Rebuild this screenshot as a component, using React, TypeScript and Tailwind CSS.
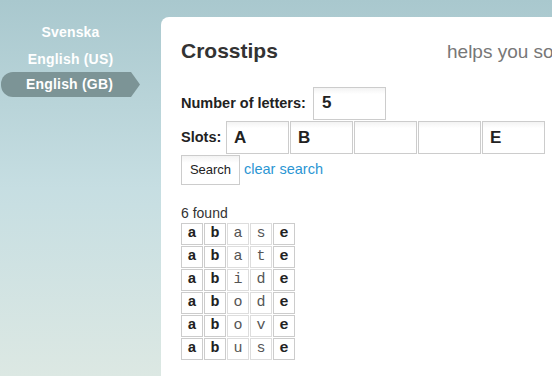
import React from "react";

const words = ["abase", "abate", "abide", "abode", "above", "abuse"];
const known = [true, true, false, false, true];
const slots = ["A", "B", "", "", "E"];

const App: React.FC = () => {
  return (
    <div className="w-[552px] h-[376px] overflow-hidden flex bg-gradient-to-b from-[#a9c8ce] via-[#c6dee2] to-[#dce8e3] font-['Liberation_Sans',Arial,sans-serif]">
      {/* Language menu */}
      <div className="w-[161px] shrink-0 pt-[22px] flex flex-col items-start text-white font-bold text-[14px] tracking-[0.2px]">
        <div className="w-[141px] h-[20px] leading-[20px] text-center">Svenska</div>
        <div className="w-[141px] h-[26px] leading-[26px] mt-[4px] text-center">English (US)</div>
        <div className="ml-px w-[139px] h-[25px] leading-[25px] rounded-l-[12px] bg-[#7c9496] text-center pr-[2px] [clip-path:polygon(0_0,calc(100%_-_9px)_0,100%_50%,calc(100%_-_9px)_100%,0_100%)]">
          English (GB)
        </div>
      </div>

      {/* Main panel */}
      <div className="flex-1 mt-[17px] bg-white rounded-tl-[8px] pl-[20px] pt-[21px] overflow-hidden">
        <div className="flex items-baseline whitespace-nowrap h-[26px]">
          <h1 className="w-[266px] shrink-0 text-[21px] leading-[24px] font-bold text-[#333]">Crosstips</h1>
          <span className="text-[19px] text-[#777]">helps you so</span>
        </div>

        <div className="mt-[23px] flex items-center">
          <span className="text-[14.5px] font-bold text-[#222] w-[132px]">Number of letters:</span>
          <div className="w-[73px] h-[33px] border border-[#ccc] bg-gradient-to-b from-[#f3f3f3] to-white to-[20%] text-[17px] font-bold text-[#222] pl-[8px] leading-[30px]">
            5
          </div>
        </div>

        <div className="mt-px flex items-center">
          <span className="text-[14.5px] font-bold text-[#222] w-[45px]">Slots:</span>
          <div className="flex gap-px">
            {slots.map((s, i) => (
              <div
                key={i}
                className="w-[63px] h-[33px] border border-[#ccc] bg-gradient-to-b from-[#f3f3f3] to-white to-[20%] text-[17px] font-bold text-[#222] pl-[7px] leading-[31px]"
              >
                {s}
              </div>
            ))}
          </div>
        </div>

        <div className="mt-px flex items-center">
          <button className="w-[59px] h-[30px] border border-[#ccc] bg-gradient-to-b from-[#f3f3f3] to-white to-[25%] text-[13px] text-[#222]">
            Search
          </button>
          <a className="ml-[4px] text-[14.5px] text-[#2b96d3] cursor-pointer">clear search</a>
        </div>

        <div className="mt-[20px] text-[14px] leading-[16px] text-[#333]">6 found</div>
        <div className="mt-[2px] flex flex-col gap-px font-['Liberation_Mono','Courier_New',monospace] text-[15px]">
          {words.map((w) => (
            <div key={w} className="flex gap-px">
              {w.split("").map((c, i) => (
                <div
                  key={i}
                  className={
                    known[i]
                      ? "w-[22px] h-[22px] border border-[#ccc] flex items-center justify-center font-bold text-[#222]"
                      : "w-[22px] h-[22px] border border-[#ddd] flex items-center justify-center text-[#555]"
                  }
                >
                  {c}
                </div>
              ))}
            </div>
          ))}
        </div>
      </div>
    </div>
  );
};

export default App;
